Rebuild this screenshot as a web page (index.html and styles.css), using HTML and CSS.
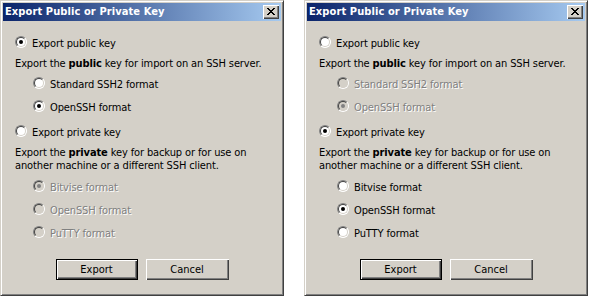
FILE: index.html
```html
<!DOCTYPE html>
<html>
<head>
<meta charset="utf-8">
<link rel="stylesheet" href="styles.css">
</head>
<body>
<div class="desk">
  <div class="win">
    <div class="title">
      <span class="title-text">Export Public or Private Key</span>
      <span class="close"><svg width="16" height="14" viewBox="0 0 16 14" shape-rendering="crispEdges"><path fill="#000" d="M4 3h2v1h-2zM10 3h2v1h-2zM5 4h2v1h-2zM9 4h2v1h-2zM6 5h4v1h-4zM7 6h2v1h-2zM6 7h4v1h-4zM5 8h2v1h-2zM9 8h2v1h-2zM4 9h2v1h-2zM10 9h2v1h-2z"/></svg></span>
    </div>
    <div class="body">
      <div class="content">
        <div class="opt main m1"><span class="radio checked"></span><span>Export public key</span></div>
        <p class="desc d1">Export the <b>public</b> key for import on an SSH server.</p>
        <div class="opt sub s1"><span class="radio"></span><span>Standard SSH2 format</span></div>
        <div class="opt sub s2"><span class="radio checked"></span><span>OpenSSH format</span></div>
        <div class="opt main m2"><span class="radio"></span><span>Export private key</span></div>
        <p class="desc d2">Export the <b>private</b> key for backup or for use on<br>another machine or a different SSH client.</p>
        <div class="opt sub s3 disabled"><span class="radio checked"></span><span>Bitvise format</span></div>
        <div class="opt sub s4 disabled"><span class="radio"></span><span>OpenSSH format</span></div>
        <div class="opt sub s5 disabled"><span class="radio"></span><span>PuTTY format</span></div>
      </div>
      <div class="buttons">
        <span class="btn default">Export</span>
        <span class="btn">Cancel</span>
      </div>
    </div>
  </div>
  <div class="win">
    <div class="title">
      <span class="title-text">Export Public or Private Key</span>
      <span class="close"><svg width="16" height="14" viewBox="0 0 16 14" shape-rendering="crispEdges"><path fill="#000" d="M4 3h2v1h-2zM10 3h2v1h-2zM5 4h2v1h-2zM9 4h2v1h-2zM6 5h4v1h-4zM7 6h2v1h-2zM6 7h4v1h-4zM5 8h2v1h-2zM9 8h2v1h-2zM4 9h2v1h-2zM10 9h2v1h-2z"/></svg></span>
    </div>
    <div class="body">
      <div class="content">
        <div class="opt main m1"><span class="radio"></span><span>Export public key</span></div>
        <p class="desc d1">Export the <b>public</b> key for import on an SSH server.</p>
        <div class="opt sub s1 disabled"><span class="radio"></span><span>Standard SSH2 format</span></div>
        <div class="opt sub s2 disabled"><span class="radio checked"></span><span>OpenSSH format</span></div>
        <div class="opt main m2"><span class="radio checked"></span><span>Export private key</span></div>
        <p class="desc d2">Export the <b>private</b> key for backup or for use on<br>another machine or a different SSH client.</p>
        <div class="opt sub s3"><span class="radio"></span><span>Bitvise format</span></div>
        <div class="opt sub s4"><span class="radio checked"></span><span>OpenSSH format</span></div>
        <div class="opt sub s5"><span class="radio"></span><span>PuTTY format</span></div>
      </div>
      <div class="buttons">
        <span class="btn default">Export</span>
        <span class="btn">Cancel</span>
      </div>
    </div>
  </div>
</div>
</body>
</html>
```
FILE: styles.css
```css
* { box-sizing: border-box; }
html, body { margin: 0; padding: 0; background: #fff; }
body {
  font-family: "DejaVu Sans Condensed", "Liberation Sans", sans-serif;
  font-size: 11px;
  color: #000;
}
.desk {
  display: flex;
  gap: 20px;
}
.win {
  width: 284px;
  height: 296px;
  background: #d4d0c8;
  border: 1px solid;
  border-color: #d4d0c8 #404040 #404040 #d4d0c8;
  box-shadow: inset 1px 1px 0 #fff, inset -1px -1px 0 #808080;
  padding: 2px;
  display: flex;
  flex-direction: column;
}
.title {
  height: 18px;
  background: linear-gradient(to right, #0a246a, #a6caf0);
  display: flex;
  align-items: center;
  justify-content: space-between;
  padding: 0 2px 0 2px;
}
.title-text {
  color: #fff;
  font-weight: bold;
  font-size: 11px;
  line-height: 18px;
  letter-spacing: 0.1px;
}
.close {
  width: 16px;
  height: 14px;
  background: #d4d0c8;
  box-shadow: inset 1px 1px 0 #fff, inset -1px -1px 0 #404040, inset -2px -2px 0 #808080;
  display: block;
}
.close svg { display: block; }
.body {
  flex: 1;
  display: flex;
  flex-direction: column;
  padding-top: 14px;
}
.content {
  display: flex;
  flex-direction: column;
  padding-left: 12px;
  letter-spacing: -0.12px;
}
.opt {
  display: flex;
  align-items: center;
  gap: 5px;
  height: 16px;
  white-space: nowrap;
}
.sub { margin-left: 18px; }
.desc {
  margin: 6px 0 0;
  line-height: 13px;
  white-space: nowrap;
}
.s1 { margin-top: 6px; }
.s2 { margin-top: 7px; }
.m2 { margin-top: 9px; }
.s3 { margin-top: 7px; }
.s4 { margin-top: 7px; }
.s5 { margin-top: 7px; }
.radio {
  flex: none;
  width: 12px;
  height: 12px;
  border-radius: 50%;
  border: 1px solid;
  border-color: #808080 #fff #fff #808080;
  background: #fff;
  position: relative;
  margin-top: -2px;
}
.radio::before {
  content: "";
  position: absolute;
  inset: 0;
  border-radius: 50%;
  border: 1px solid;
  border-color: #404040 #d4d0c8 #d4d0c8 #404040;
}
.radio.checked::after {
  content: "";
  position: absolute;
  left: 3px;
  top: 3px;
  width: 4px;
  height: 4px;
  border-radius: 50%;
  background: #000;
}
.disabled { color: #808080; text-shadow: 1px 1px 0 #fff; }
.disabled .radio { background: #d4d0c8; }
.disabled .radio.checked::after { background: #808080; }
.buttons {
  display: flex;
  justify-content: center;
  gap: 8px;
  margin-top: 18px;
}
.btn {
  width: 83px;
  height: 21px;
  display: flex;
  align-items: center;
  justify-content: center;
  background: #d4d0c8;
  box-shadow: inset 1px 1px 0 #fff, inset -1px -1px 0 #404040, inset -2px -2px 0 #808080;
}
.btn.default {
  border: 1px solid #000;
  width: 82px;
}
```
